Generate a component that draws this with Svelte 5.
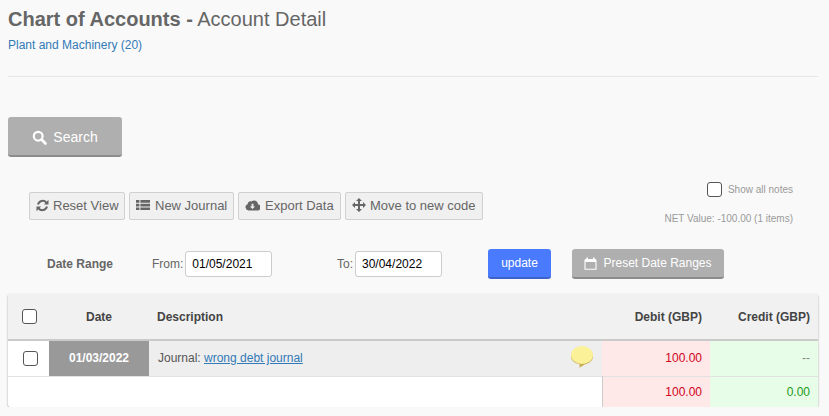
<script lang="ts">
  // Account detail page: header, filters and the single-journal ledger table.
  const toolbar = [
    { label: "Reset View", icon: "refresh" },
    { label: "New Journal", icon: "list" },
    { label: "Export Data", icon: "cloud" },
    { label: "Move to new code", icon: "move" },
  ];
</script>

<div class="page">
  <header class="head">
    <h1><b>Chart of Accounts -</b> Account Detail</h1>
    <a class="sub" href="#top">Plant and Machinery (20)</a>
  </header>

  <button class="solid search">
    <svg width="15" height="15" viewBox="0 0 15 15"><circle cx="6.2" cy="6.2" r="4.4" fill="none" stroke="#fff" stroke-width="2.2" /><path d="M9.6 9.6 13.4 13.4" stroke="#fff" stroke-width="2.8" stroke-linecap="round" /></svg>
    Search
  </button>

  <div class="tools">
    <div class="tool-btns">
      {#each toolbar as t (t.label)}
        <button class="tool">
          {#if t.icon === "refresh"}
            <svg width="13" height="13" viewBox="0 0 13 13" fill="none" stroke="#666" stroke-width="2"><path d="M2 5.4A4.8 4.8 0 0 1 10.4 3.6" /><path d="M11 7.6A4.8 4.8 0 0 1 2.6 9.4" /><path d="M12.5.8v4.6H7.9z" fill="#666" stroke="none" /><path d="M.5 12.2V7.6h4.6z" fill="#666" stroke="none" /></svg>
          {:else if t.icon === "list"}
            <svg width="14" height="12" viewBox="0 0 14 12" fill="#666"><path d="M0 1h3.4v2.7H0zM4.4 1H14v2.7H4.4zM0 4.7h3.4v2.7H0zM4.4 4.7H14v2.7H4.4zM0 8.4h3.4v2.7H0zM4.4 8.4H14v2.7H4.4z" /></svg>
          {:else if t.icon === "cloud"}
            <svg width="15" height="12" viewBox="0 0 15 12"><path fill="#666" d="M3.4 11.4A3.2 3.2 0 0 1 2.6 5.2 3.4 3.4 0 0 1 6.4 2.4 4 4 0 0 1 13 5.2 3.1 3.1 0 0 1 11.8 11.4z" /><path fill="#f0f0f0" d="M6.6 4.8h1.8v2.6h1.7L7.5 10 4.9 7.4h1.7z" /></svg>
          {:else}
            <svg width="14" height="14" viewBox="0 0 14 14" fill="#666"><path d="M6 3h2v3h3V4l3 3-3 3V8H8v3h2l-3 3-3-3h2V8H3v2L0 7l3-3v2h3V3H4l3-3 3 3z" /></svg>
          {/if}
          {t.label}
        </button>
      {/each}
    </div>
    <div class="meta">
      <label class="notes"><span class="box"></span>Show all notes</label>
      <span class="net">NET Value: -100.00 (1 items)</span>
    </div>
  </div>

  <div class="range">
    <span class="range-label">Date Range</span>
    <span class="field from">From:<input value="01/05/2021" /></span>
    <span class="field to">To:<input value="30/04/2022" /></span>
    <button class="solid update">update</button>
    <button class="solid preset">
      <svg width="13" height="13" viewBox="0 0 13 13" fill="none"><path d="M1 3.2h11v9H1z" stroke="#fff" stroke-width="1.1" /><path d="M1 2h11v3H1z" fill="#fff" /><path d="M3.2.4v2M9.8.4v2" stroke="#fff" stroke-width="1.6" /></svg>
      Preset Date Ranges
    </button>
  </div>

  <table>
    <thead>
      <tr>
        <th class="chk"><span class="box"></span></th>
        <th class="date">Date</th>
        <th class="desc">Description</th>
        <th class="num">Debit (GBP)</th>
        <th class="num">Credit (GBP)</th>
      </tr>
    </thead>
    <tbody>
      <tr class="row">
        <td class="chk"><span class="box"></span></td>
        <td class="date-cell">01/03/2022</td>
        <td class="desc-cell">
          <div class="desc-wrap">
            <span>Journal: <a href="#top">wrong debt journal</a></span>
            <svg class="note" width="22" height="22" viewBox="0 0 22 22"><path d="M8.6 21.8 8.4 18C3.4 17.2 0 14.2 0 10.4 0 5.6 5 2 11 2s11 3.6 11 8.4c0 4-3.6 7-8 7.8z" fill="#c9ad55" /><ellipse cx="11" cy="9" rx="11" ry="9" fill="#fbf198" /></svg>
          </div>
        </td>
        <td class="num debit">100.00</td>
        <td class="num credit dash">--</td>
      </tr>
      <tr class="total">
        <td colspan="3"></td>
        <td class="num debit sum">100.00</td>
        <td class="num credit zero">0.00</td>
      </tr>
    </tbody>
  </table>
</div>

<style>
  :global(body) { margin: 0; background: #f9f9f9; }
  .page { padding: 8px 11px 0 8px; font-family: "Liberation Sans", Arial, sans-serif; font-size: 12px; color: #555; }

  .head { border-bottom: 1px solid #e7e7e7; height: 68px; }
  h1 { margin: 0; font-size: 20px; line-height: 23px; font-weight: 400; color: #666; }
  h1 b { font-weight: 700; }
  .sub { display: block; margin-top: 6px; font-size: 12px; line-height: 16px; color: #337ab7; text-decoration: none; }

  button { font-family: inherit; cursor: pointer; }
  .solid {
    display: flex; align-items: center; justify-content: center; gap: 6px;
    border: 0; border-bottom: 2px solid #8c8c8c; border-radius: 3px;
    background: #afafaf; color: #fff; padding: 0;
  }
  .search { width: 114px; height: 40px; margin-top: 40px; padding-top: 2px; font-size: 14px; }

  .tools { display: flex; justify-content: space-between; margin-top: 23px; height: 44px; }
  .tool-btns { display: flex; gap: 4px; margin: 12px 0 0 21px; align-items: flex-start; }
  .tool {
    box-sizing: border-box; display: flex; align-items: center; gap: 4px; height: 28px; padding: 0 0 2px 6px;
    border: 1px solid #d0d0d0; border-radius: 2px; background: #f0f0f0;
    color: #666; font-size: 13px; white-space: nowrap;
  }
  .tool:nth-child(1) { width: 96px; }
  .tool:nth-child(2) { width: 105px; gap: 5px; }
  .tool:nth-child(3) { width: 103px; gap: 5px; }
  .tool:nth-child(4) { width: 138px; }

  .meta { display: flex; flex-direction: column; align-items: flex-end; margin: 2px 25px 0 0; font-size: 10px; color: #999; }
  .notes { display: flex; align-items: center; gap: 6px; }
  .net { margin-top: 16px; }

  .box {
    display: block; width: 13px; height: 13px; box-sizing: content-box;
    border: 1px solid #555; border-radius: 3px; background: #fff;
  }

  .range { display: flex; align-items: center; height: 30px; margin-top: 25px; }
  .range-label { margin-left: 39px; width: 105px; font-weight: 700; color: #666; }
  .field { display: flex; align-items: center; gap: 2px; color: #666; }
  .from { width: 185px; }
  .to { width: 151px; }
  input {
    box-sizing: border-box; width: 87px; height: 26px; padding: 0 6px;
    border: 1px solid #ccc; border-radius: 3px; background: #fff;
    font: 12px "Liberation Sans", Arial, sans-serif; color: #000;
  }
  .update { width: 63px; height: 30px; background: #4a7bff; border-bottom-color: #3d63c9; font-size: 12px; }
  .preset { width: 152px; height: 30px; margin-left: 21px; font-size: 12px; }

  table {
    width: 810px; margin-top: 15px; border-collapse: collapse; table-layout: fixed;
    background: #fff; box-shadow: 0 1px 2px rgba(0, 0, 0, 0.4); border-radius: 2px;
  }
  thead tr { background: #f1f1f1; border-bottom: 2px solid #cacaca; height: 46px; }
  th { font-size: 12px; font-weight: 700; color: #444; padding: 0; text-align: left; }
  th.chk { width: 41px; }
  th.date { width: 100px; text-align: center; }
  th.desc { padding-left: 8px; }
  th.num, td.num { width: 108px; box-sizing: border-box; padding: 0 8px 0 0; text-align: right; }
  td { padding: 0; }
  th.chk .box { margin-left: 14px; }
  td.chk .box { margin-left: 15px; }
  .row { height: 36px; border-bottom: 1px solid #e2e2e2; }
  .date-cell { background: #999; color: #fff; text-align: center; font-weight: 700; }
  .desc-cell { background: #eee; padding: 0 9px 0 9px; color: #555; }
  .desc-wrap { display: flex; justify-content: space-between; align-items: center; }
  .desc-cell a { color: #337ab7; text-decoration: underline; }
  .note { margin-bottom: 2px; }
  .total { height: 31px; }
  .debit { background: #ffe8e8; color: #d0021b; }
  .credit { background: #e8fde8; }
  .sum { border-left: 1px solid #ccc; }
  .dash { color: #888; }
  .zero { color: #1a9a1a; }
</style>
